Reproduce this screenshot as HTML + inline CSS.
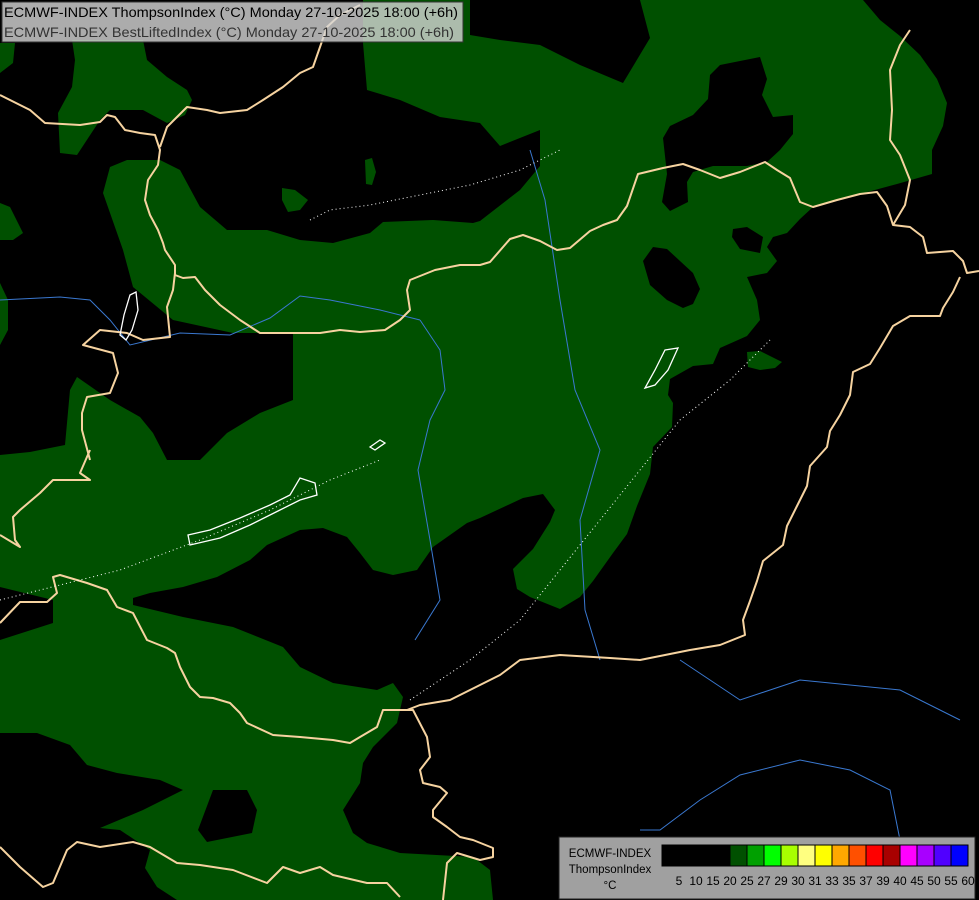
<!DOCTYPE html>
<html><head><meta charset="utf-8"><style>
html,body{margin:0;padding:0;background:#000;width:979px;height:900px;overflow:hidden}
svg{display:block}
text{font-family:"Liberation Sans",sans-serif}
</style></head><body>
<svg width="979" height="900" viewBox="0 0 979 900" xmlns="http://www.w3.org/2000/svg">
<rect width="979" height="900" fill="#000"/>
<g fill="#005000" stroke="none">
<polygon points="363,0 863,0 880,20 900,36 920,55 937,79 947,103 943,126 932,150 932,174 897,184 860,194 833,202 813,207 800,219 787,233 773,237 767,247 777,261 767,273 747,277 757,300 760,320 747,336 720,348 713,364 693,366 670,379 668,395 673,403 672,427 653,447 650,474 637,506 627,534 613,553 593,581 580,597 560,609 530,597 517,589 513,569 533,549 550,522 555,510 543,494 523,498 480,518 467,523 433,547 417,570 393,575 373,570 360,553 347,537 323,528 300,530 267,545 250,560 217,577 183,587 150,593 133,598 133,605 183,617 233,627 283,647 300,667 333,683 377,690 393,683 403,697 397,723 373,747 363,763 360,783 343,810 353,833 367,843 400,853 473,857 490,870 493,900 177,900 157,887 145,868 150,850 120,830 100,828 143,810 183,790 160,780 117,773 87,765 70,745 37,733 0,733 0,640 53,623 53,600 0,587 0,455 30,452 65,445 70,390 77,377 110,400 140,417 153,433 167,460 200,460 227,433 260,413 293,400 293,333 233,333 173,320 133,287 123,250 103,193 110,167 127,160 160,160 180,170 200,207 227,230 267,230 300,240 333,243 370,233 383,222 433,220 473,223 480,221 520,190 540,166 540,130 500,146 480,123 440,117 400,100 367,90 363,43"/>
<polygon points="72,40 143,40 147,60 167,77 187,90 192,100 185,115 167,123 143,110 110,110 100,120 77,155 60,153 58,113 72,87 75,60"/>
<polygon points="0,43 15,43 13,63 0,73"/>
<polygon points="0,203 10,207 23,233 13,240 0,240"/>
<polygon points="0,283 8,300 8,330 0,345"/>
<polygon points="282,188 295,190 308,200 300,210 288,212 282,200"/>
<polygon points="365,160 372,158 376,172 372,185 366,184"/>
<polygon points="747,352 760,351 782,362 775,368 760,370 748,367"/>
</g>
<g fill="#000">
<polygon points="470,0 640,0 650,38 623,83 580,65 540,45 500,40 470,35"/>
<polygon points="708,99 710,75 720,65 760,57 767,79 762,95 773,117 793,115 793,134 780,150 767,162 747,166 713,166 693,172 687,182 688,202 670,211 662,202 667,174 663,138 670,126 693,115"/>
<polygon points="643,261 653,247 667,249 680,261 693,273 700,289 693,304 683,308 667,300 650,285"/>
<polygon points="733,229 747,227 763,237 760,253 740,249 732,237"/>
<polygon points="213,790 247,790 257,810 252,833 207,842 198,830"/>
</g>
<g fill="none" stroke="#3a78d0" stroke-width="1">
<polyline points="0,300 60,297 90,300 110,320 130,345 180,333 230,335 270,318 300,296 330,300 380,310 420,320"/>
<polyline points="420,320 440,350 445,390 430,420 418,470 430,540 440,600 415,640"/>
<polyline points="530,150 545,200 560,300 575,390 600,450 580,520 585,610 600,660"/>
<polyline points="680,660 740,700 800,680 900,690 960,720"/>
<polyline points="640,830 660,830 700,800 740,775 800,760 850,770 890,790 900,840"/>
</g>
<g fill="none" stroke="#f6d3a0" stroke-width="2" stroke-linejoin="round">
<polyline points="0,95 30,110 45,123 80,125 100,122 107,115 115,117 125,130 140,133 155,135 160,150 158,165 148,180 145,200 150,215 158,230 163,243 165,250 175,265 175,275 183,278 195,277 205,290 220,305 240,320 260,333 290,333 320,333 340,330 360,332 385,330 400,320 410,310 407,290 410,280 435,270 460,265 480,265 490,262 510,239 523,235 540,241 557,250 570,248 590,231 603,225 617,220 627,206 638,174 663,168 683,164 700,170 720,178 740,172 750,168 765,162 777,170 790,178 800,202 813,207 837,200 860,194 877,192 887,206 893,225 910,227 923,237 927,253 953,251 963,261 967,273 979,271"/>
<polyline points="960,277 953,292 943,308 940,316 910,316 893,326 880,348 870,364 853,372 850,395 840,415 830,431 827,447 810,466 807,486 797,506 787,526 783,545 763,561 757,581 750,601 743,620 745,635 720,645 690,650 640,660 610,658 560,655 520,660 500,675 470,690 450,700 420,705 407,710 383,710 377,727 360,737 350,743 333,740 300,737 273,735 247,723 240,713 230,703 213,698 200,697 190,687 180,667 175,653 167,648 147,640 133,613 117,607 107,590 87,583 60,575 53,577 57,593 47,602 20,602 0,623"/>
<polyline points="407,710 413,710 427,737 430,757 420,770 423,783 440,787 447,793 433,810 433,817 447,827 460,837 473,840 493,848 493,857 480,860 457,853 447,863 443,900"/>
<polyline points="0,847 20,867 43,887 53,883 67,850 77,842 100,847 133,842 150,847 177,863 200,865 233,870 267,883 283,867 300,873 320,867 333,875 367,883 387,883 400,897"/>
<polyline points="90,450 80,473 90,480 53,480 40,493 20,510 13,517 15,540 20,547 0,535"/>
<polyline points="160,147 167,127 187,107 207,110 220,113 247,110 263,100 283,87 300,73 313,67 320,47 327,27 340,15 360,5"/>
<polyline points="175,273 173,290 167,307 170,337 143,340 127,333 100,330 83,345 113,353 118,373 110,393 87,397 82,413 82,430 90,460"/>
<polyline points="893,225 905,205 910,180 900,155 890,140 892,110 890,70 900,45 910,30"/>
</g>
<g fill="none" stroke="#fff" stroke-width="1" stroke-dasharray="1,3">
<polyline points="310,220 330,210 370,205 420,195 470,185 520,170 560,150"/>
<polyline points="410,700 470,660 520,620 560,570 600,520 640,470 680,420 730,380 770,340"/>
<polyline points="0,600 60,585 120,570 200,540 270,510 330,480 380,460"/>
</g>
<g fill="none" stroke="#fff" stroke-width="1.3">
<path d="M190,545 L188,535 L210,530 L240,518 L270,505 L290,495 L300,478 L315,483 L317,495 L300,500 L280,510 L250,525 L220,538 Z"/>
<path d="M130,295 L136,292 L138,310 L132,330 L126,340 L120,335 L124,315 Z"/>
<path d="M665,350 L678,348 L668,370 L655,385 L645,388 L655,370 Z"/>
<path d="M370,447 L380,440 L385,443 L375,450 Z"/>
</g>
<rect x="2" y="2" width="461" height="40" fill="rgba(215,215,215,0.8)" stroke="#333" stroke-width="1"/>
<text x="4" y="17" font-size="14" fill="#000" textLength="454" lengthAdjust="spacingAndGlyphs">ECMWF-INDEX ThompsonIndex (°C) Monday 27-10-2025 18:00 (+6h)</text>
<text x="4" y="37" font-size="14" fill="#333" textLength="450" lengthAdjust="spacingAndGlyphs">ECMWF-INDEX BestLiftedIndex (°C) Monday 27-10-2025 18:00 (+6h)</text>
<rect x="559" y="837" width="416" height="62" fill="#a0a0a0" stroke="#222" stroke-width="1"/>
<text x="610" y="857" font-size="11.5" fill="#000" text-anchor="middle">ECMWF-INDEX</text>
<text x="610" y="873" font-size="11.5" fill="#000" text-anchor="middle">ThompsonIndex</text>
<text x="610" y="889" font-size="11.5" fill="#000" text-anchor="middle">°C</text>
<g stroke="#000" stroke-width="1">
<rect x="662" y="845" width="17" height="21" fill="#000"/>
<rect x="679" y="845" width="17" height="21" fill="#000"/>
<rect x="696" y="845" width="17" height="21" fill="#000"/>
<rect x="713" y="845" width="17" height="21" fill="#000"/>
<rect x="730" y="845" width="17" height="21" fill="#005000"/>
<rect x="747" y="845" width="17" height="21" fill="#00a000"/>
<rect x="764" y="845" width="17" height="21" fill="#00ff00"/>
<rect x="781" y="845" width="17" height="21" fill="#a8ff00"/>
<rect x="798" y="845" width="17" height="21" fill="#ffff80"/>
<rect x="815" y="845" width="17" height="21" fill="#ffff00"/>
<rect x="832" y="845" width="17" height="21" fill="#ffa800"/>
<rect x="849" y="845" width="17" height="21" fill="#ff5000"/>
<rect x="866" y="845" width="17" height="21" fill="#ff0000"/>
<rect x="883" y="845" width="17" height="21" fill="#a80000"/>
<rect x="900" y="845" width="17" height="21" fill="#ff00ff"/>
<rect x="917" y="845" width="17" height="21" fill="#a800ff"/>
<rect x="934" y="845" width="17" height="21" fill="#5000ff"/>
<rect x="951" y="845" width="17" height="21" fill="#0000ff"/>
</g>
<g font-size="12" fill="#000" text-anchor="middle">
<text x="679" y="885">5</text><text x="696" y="885">10</text><text x="713" y="885">15</text><text x="730" y="885">20</text><text x="747" y="885">25</text><text x="764" y="885">27</text><text x="781" y="885">29</text><text x="798" y="885">30</text><text x="815" y="885">31</text><text x="832" y="885">33</text><text x="849" y="885">35</text><text x="866" y="885">37</text><text x="883" y="885">39</text><text x="900" y="885">40</text><text x="917" y="885">45</text><text x="934" y="885">50</text><text x="951" y="885">55</text><text x="968" y="885">60</text>
</g>
</svg>
</body></html>
